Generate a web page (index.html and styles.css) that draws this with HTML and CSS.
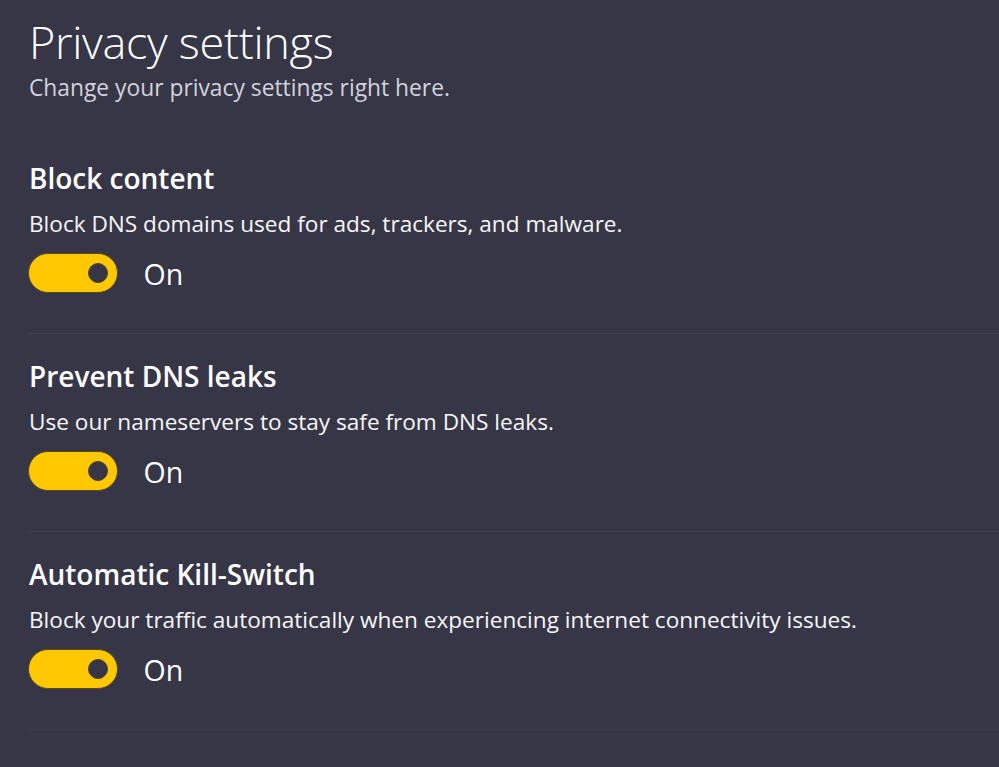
FILE: index.html
```html
<!DOCTYPE html>
<html lang="en">
<head>
    <meta charset="UTF-8">
    <meta name="viewport" content="width=device-width, initial-scale=1.0">
    <title>Privacy settings</title>
    <link rel="stylesheet" href="styles.css">
</head>
<body>
    <div class="page">
        <div class="header">
            <h1 class="title">Privacy settings</h1>
            <div class="subtitle">Change your privacy settings right here.</div>
        </div>

        <div class="settings">
            <div class="setting">
                <div class="setting-title">Block content</div>
                <div class="setting-desc">Block DNS domains used for ads, trackers, and malware.</div>
                <div class="toggle-row">
                    <span class="toggle on"><span class="knob"></span></span>
                    <span class="toggle-label">On</span>
                </div>
            </div>

            <div class="setting">
                <div class="setting-title">Prevent DNS leaks</div>
                <div class="setting-desc">Use our nameservers to stay safe from DNS leaks.</div>
                <div class="toggle-row">
                    <span class="toggle on"><span class="knob"></span></span>
                    <span class="toggle-label">On</span>
                </div>
            </div>

            <div class="setting">
                <div class="setting-title">Automatic Kill-Switch</div>
                <div class="setting-desc">Block your traffic automatically when experiencing internet connectivity issues.</div>
                <div class="toggle-row">
                    <span class="toggle on"><span class="knob"></span></span>
                    <span class="toggle-label">On</span>
                </div>
            </div>
        </div>
    </div>
</body>
</html>
```

FILE: styles.css
```css
body {
    margin: 0;
    padding: 0;
    background-color: #373647;
    color: #fff;
    font-family: "Open Sans", "Noto Sans", Arial, sans-serif;
    overflow: hidden;
}

.page {
    padding-left: 29px;
    height: 767px;
}

.header {
    padding-top: 12px;
}

.title {
    margin: 0;
    font-size: 45px;
    font-weight: 300;
    line-height: 60px;
    letter-spacing: -0.3px;
}

.subtitle {
    margin-top: 1px;
    font-size: 22.8px;
    line-height: 30px;
    color: #d2d2dc;
}

.settings {
    margin-top: 57px;
}

.setting {
    padding-bottom: 40px;
    border-bottom: 1px solid #41404f;
}

.setting + .setting {
    padding-top: 24px;
}

.setting-title {
    font-size: 28px;
    font-weight: 600;
    line-height: 36px;
}

.setting-desc {
    margin-top: 13px;
    font-size: 22.6px;
    line-height: 30px;
    color: #f7f7f9;
}

.toggle-row {
    display: flex;
    align-items: center;
    height: 40px;
    margin-top: 14px;
}

.toggle {
    display: flex;
    justify-content: flex-end;
    align-items: center;
    box-sizing: border-box;
    width: 90px;
    height: 40px;
    margin-left: -1.5px;
    padding-right: 9px;
    border-radius: 20px;
    background-color: #ffc800;
    border: 1px solid #5a4a1e;
}

.knob {
    box-sizing: border-box;
    width: 20px;
    height: 20px;
    border-radius: 50%;
    background-color: #373647;
    border: 1.5px solid #4b3f22;
}

.toggle-label {
    margin-left: 26px;
    margin-top: 3px;
    font-size: 28.5px;
    line-height: 37px;
}
```
